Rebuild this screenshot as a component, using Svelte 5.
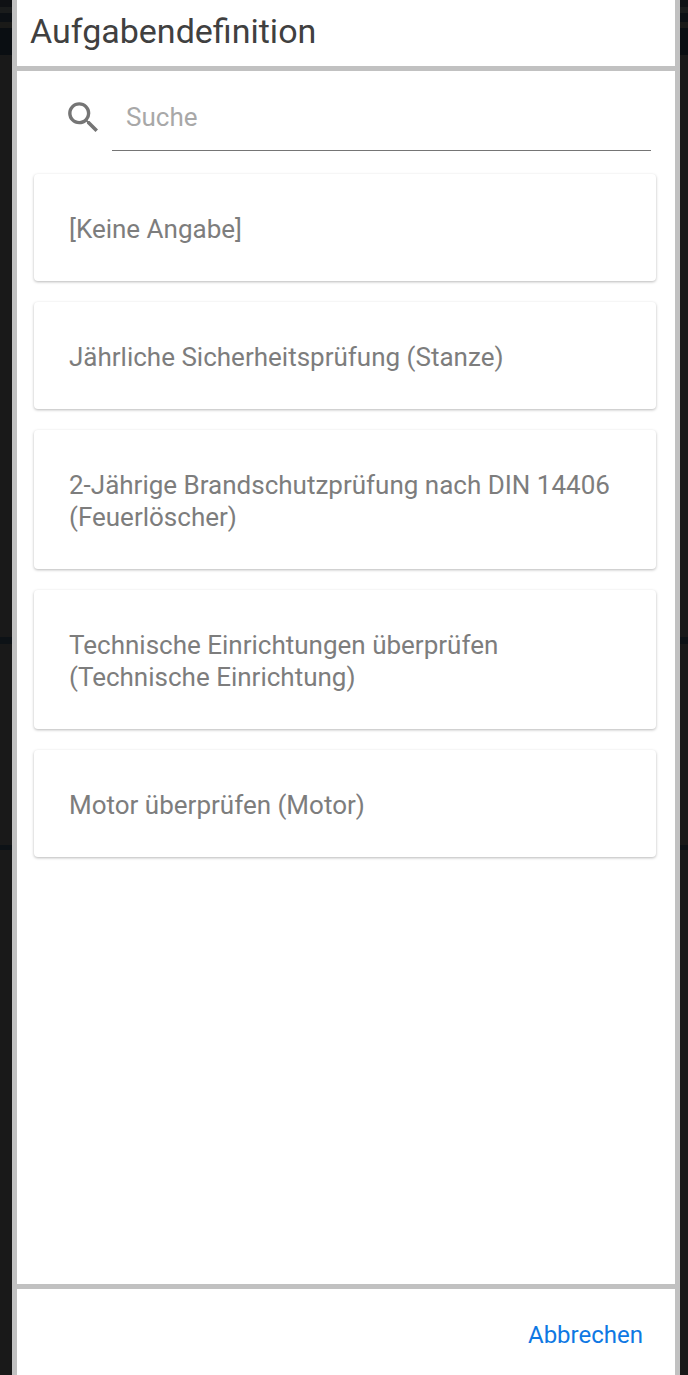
<script>
  const tasks = [
    '[Keine Angabe]',
    'Jährliche Sicherheitsprüfung (Stanze)',
    '2-Jährige Brandschutzprüfung nach DIN 14406 (Feuerlöscher)',
    'Technische Einrichtungen überprüfen (Technische Einrichtung)',
    'Motor überprüfen (Motor)'
  ];
</script>

<div class="backdrop">
  <div class="dialog">
    <header>Aufgabendefinition</header>

    <main>
      <div class="search">
        <svg viewBox="0 0 24 24" width="41" height="41" aria-hidden="true">
          <path d="M15.5 14h-.79l-.28-.27A6.47 6.47 0 0 0 16 9.5 6.5 6.5 0 1 0 9.5 16c1.61 0 3.09-.59 4.23-1.57l.27.28v.79l5 4.99L20.49 19l-4.99-5zm-6 0C7.01 14 5 11.99 5 9.5S7.01 5 9.5 5 14 7.01 14 9.5 11.99 14 9.5 14z" />
        </svg>
        <input type="text" placeholder="Suche" />
      </div>

      <div class="list">
        {#each tasks as task}
          <div class="card">{task}</div>
        {/each}
      </div>
    </main>

    <footer>
      <button>Abbrechen</button>
    </footer>
  </div>
</div>

<style>
  :global(body) {
    margin: 0;
    background: #191919;
  }

  .backdrop {
    height: 1375px;
    padding: 0 8px 0 12px;
    box-sizing: border-box;
    /* the app behind the dialog shows through as a few dark bands */
    background: linear-gradient(
      to bottom,
      #0f1114 0 7px,
      #1a1c1c 7px 13px,
      #0c1014 13px 22px,
      #1a1a18 22px 28px,
      #0a0e12 28px 55px,
      #191919 55px 637px,
      #0d1216 637px 644px,
      #191919 644px 845px,
      #0d1216 845px 850px,
      #191919 850px
    );
    font-family: Roboto, "Liberation Sans", sans-serif;
  }

  .dialog {
    height: 100%;
    display: flex;
    flex-direction: column;
    box-sizing: border-box;
    border-left: 5px solid #c1c1c1;
    border-right: 5px solid #c1c1c1;
    background: #fff;
  }

  header {
    height: 54px;
    padding: 12px 0 0 13px;
    border-bottom: 5px solid #c1c1c1;
    font-size: 34px;
    line-height: 39px;
    color: #404040;
  }

  main {
    flex: 1;
    padding: 0 19px 0 17px;
  }

  .search {
    display: flex;
    align-items: center;
    height: 80px;
    margin-right: 5px;
    padding-left: 29px;
  }

  svg {
    flex: none;
    margin-right: 8px;
    margin-top: 12px;
    fill: #757575;
  }

  input {
    flex: 1;
    min-width: 0;
    height: 80px;
    box-sizing: border-box;
    padding: 12px 14px 0;
    border: 0;
    border-bottom: 1px solid #757575;
    border-radius: 0;
    outline: none;
    background: transparent;
    font: inherit;
    font-size: 26px;
    color: #333;
  }

  input::placeholder {
    color: #a8a8a8;
    opacity: 1;
  }

  .list {
    display: flex;
    flex-direction: column;
    gap: 21px;
    margin-top: 23px;
  }

  .card {
    padding: 39px 35px 36px;
    border-radius: 4px;
    background: #fff;
    box-shadow: 0 1px 3px rgba(0, 0, 0, 0.28);
    font-size: 26px;
    line-height: 32px;
    color: #7d7d7d;
  }

  footer {
    height: 86px;
    display: flex;
    justify-content: flex-end;
    border-top: 5px solid #c1c1c1;
  }

  button {
    align-self: flex-start;
    margin: 28px 32px 0 0;
    padding: 0;
    border: 0;
    background: none;
    font: inherit;
    font-size: 24px;
    line-height: 36px;
    color: #0f78e3;
  }
</style>
